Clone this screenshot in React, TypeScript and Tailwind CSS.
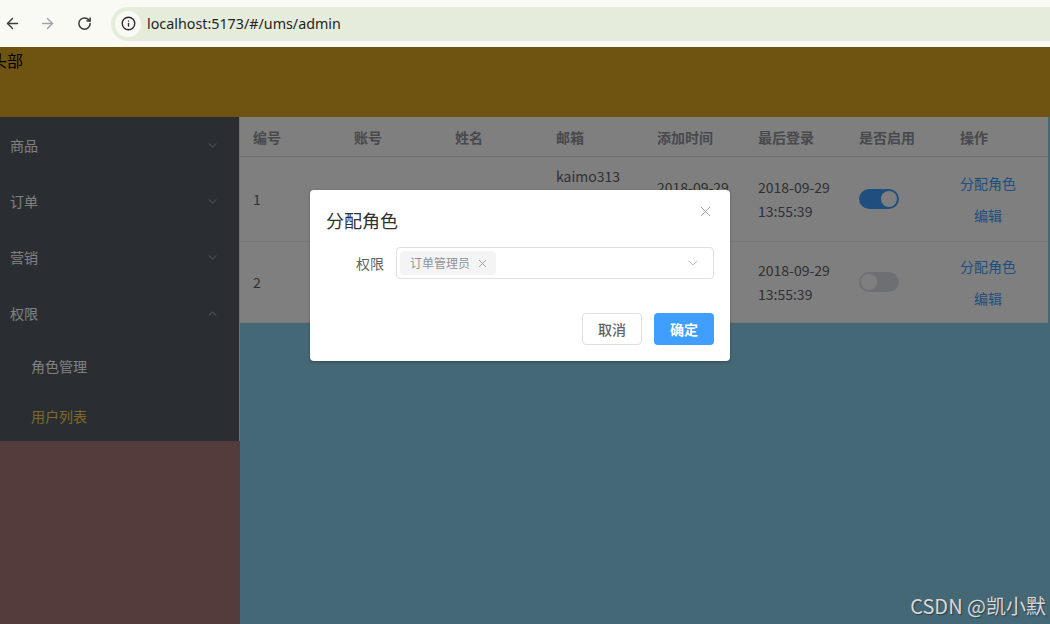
import { ArrowLeft, ArrowRight, RotateCw, Info, ChevronDown, ChevronUp, X } from 'lucide-react'

const COLS = ['编号', '账号', '姓名', '邮箱', '添加时间', '最后登录', '是否启用', '操作']

type Row = {
  id: number
  username: string
  nickName: string
  email: string[]
  createTime: [string, string]
  loginTime: [string, string]
  enabled: boolean
  height: string
}

const ROWS: Row[] = [
  {
    id: 1,
    username: 'admin',
    nickName: '系统管理员',
    email: ['kaimo313', '@foxmail.', 'com'],
    createTime: ['2018-09-29', '13:55:30'],
    loginTime: ['2018-09-29', '13:55:39'],
    enabled: true,
    height: 'h-[85px]',
  },
  {
    id: 2,
    username: 'kaimo',
    nickName: '凯小默',
    email: ['kaimo@qq', '.com'],
    createTime: ['2018-09-29', '13:55:30'],
    loginTime: ['2018-09-29', '13:55:39'],
    enabled: false,
    height: 'h-[81px]',
  },
]

const MENU = ['商品', '订单', '营销']

function BrowserBar() {
  return (
    <div className="flex h-[47px] items-center bg-[#f8faf3]">
      <div className="flex w-[111px] items-center">
        <ArrowLeft size={17} strokeWidth={2} className="ml-[4px] text-[#3c3c3c]" />
        <ArrowRight size={17} strokeWidth={2} className="ml-[18px] text-[#a3a3a3]" />
        <RotateCw size={15} strokeWidth={2.4} className="ml-[21px] text-[#3c3c3c]" />
      </div>
      <div className="flex h-[34px] flex-1 items-center rounded-l-full bg-[#e5ecdc] pl-[4px]">
        <div className="flex h-[26px] w-[26px] items-center justify-center rounded-full bg-[#f8faf3]">
          <Info size={15} strokeWidth={2.2} className="text-[#2a2a2a]" />
        </div>
        <span className="ml-[6px] font-['Noto_Sans','Open_Sans',sans-serif] text-[14.3px] text-[#1f1f1f]">
          localhost:5173/#/ums/admin
        </span>
      </div>
    </div>
  )
}

function Sidebar() {
  return (
    <div className="flex w-[240px] flex-col">
      <div className="border-r border-[#e6e6e6] bg-[#545c66] text-[14px] text-white">
        {MENU.map((m) => (
          <div key={m} className="flex h-[56px] items-center justify-between pl-[10px] pr-[20px]">
            <span>{m}</span>
            <ChevronDown size={13} strokeWidth={1.5} className="text-[#d0d0d0]" />
          </div>
        ))}
        <div className="flex h-[56px] items-center justify-between pl-[10px] pr-[20px]">
          <span>权限</span>
          <ChevronUp size={13} strokeWidth={1.5} className="text-[#d0d0d0]" />
        </div>
        <div className="flex h-[50px] items-center pl-[31px]">角色管理</div>
        <div className="flex h-[50px] items-center pl-[31px] text-[#ffd04b]">用户列表</div>
      </div>
      <div className="flex-1 bg-[#a67874]" />
    </div>
  )
}

function Switch({ on }: { on: boolean }) {
  return (
    <div
      className={`flex h-[20px] w-[40px] items-center rounded-full px-[2px] ${
        on ? 'justify-end bg-[#409eff]' : 'justify-start bg-[#dcdfe6]'
      }`}
    >
      <div className="h-[16px] w-[16px] rounded-full bg-white" />
    </div>
  )
}

function Lines({ lines }: { lines: string[] }) {
  return (
    <div className="flex flex-col">
      {lines.map((l) => (
        <span key={l}>{l}</span>
      ))}
    </div>
  )
}

function UserTable() {
  return (
    <div className="w-[808px] bg-white text-[14px] leading-6 text-[#606266]">
      <div className="grid h-[40px] grid-cols-8 border-b border-[#dfe2e8] font-bold text-[#909399]">
        {COLS.map((c) => (
          <div key={c} className="flex items-center pl-[13px] pr-3">
            {c}
          </div>
        ))}
      </div>
      {ROWS.map((r) => (
        <div key={r.id} className={`grid grid-cols-8 border-b border-[#ebeef5] ${r.height}`}>
          <div className="flex items-center pl-[13px] pr-3">{r.id}</div>
          <div className="flex items-center pl-[13px] pr-3">{r.username}</div>
          <div className="flex items-center pl-[13px] pr-3">{r.nickName}</div>
          <div className="flex items-center pl-[13px] pr-3 leading-[23px]">
            <Lines lines={r.email} />
          </div>
          <div className="flex items-center pl-[13px] pr-3">
            <Lines lines={r.createTime} />
          </div>
          <div className="flex items-center pl-[13px] pr-3">
            <Lines lines={r.loginTime} />
          </div>
          <div className="flex items-center pl-[13px] pr-3">
            <Switch on={r.enabled} />
          </div>
          <div className="flex items-center pl-[13px] pr-3">
            <div className="flex flex-col items-center gap-[8px] text-[#409eff]">
              <span>分配角色</span>
              <span>编辑</span>
            </div>
          </div>
        </div>
      ))}
    </div>
  )
}

function RoleDialog() {
  return (
    <div className="absolute left-[310px] top-[143px] w-[420px] rounded bg-white shadow-[0_1px_3px_rgba(0,0,0,0.3)]">
      <div className="flex items-start justify-between pl-[16px] pr-[16px] pt-[18px]">
        <span className="text-[18px] leading-6 text-[#303133]">分配角色</span>
        <X size={17} strokeWidth={1.2} className="mt-[-5px] text-[#909399]" />
      </div>
      <div className="mt-[15px] flex items-center pl-[20px] pr-[16px]">
        <label className="w-[66px] pr-[12px] text-right text-[14px] text-[#606266]">权限</label>
        <div className="flex h-[32px] flex-1 items-center justify-between rounded border border-[#dcdfe6] pl-[3px] pr-[12px]">
          <span className="flex h-[24px] items-center gap-[6px] rounded bg-[#f4f4f5] pl-[10px] pr-[7px] text-[12px] text-[#909399]">
            订单管理员
            <X size={13} strokeWidth={1.5} />
          </span>
          <ChevronDown size={16} strokeWidth={1.2} className="text-[#a8abb2]" />
        </div>
      </div>
      <div className="mt-[34px] flex justify-end gap-[12px] pb-[16px] pr-[16px]">
        <button className="h-[32px] w-[60px] rounded border border-[#dcdfe6] bg-white text-[14px] font-medium text-[#606266]">
          取消
        </button>
        <button className="h-[32px] w-[60px] rounded bg-[#409eff] text-[14px] font-semibold text-white">
          确定
        </button>
      </div>
    </div>
  )
}

export default function App() {
  return (
    <div className="relative h-[624px] w-[1050px] overflow-hidden font-['Noto_Sans_CJK_SC','Noto_Sans',sans-serif]">
      <BrowserBar />
      <div className="relative flex h-[577px] flex-col">
        <header className="h-[70px] bg-[#dca821] text-[16px] leading-6 text-black">
          <span className="ml-[-9px] inline-block pt-[1px]">头部</span>
        </header>
        <div className="flex flex-1">
          <Sidebar />
          <main className="flex-1 bg-[#8ad0ec]">
            <UserTable />
          </main>
        </div>
        {/* dialog mask */}
        <div className="absolute inset-0 bg-black/50" />
        <RoleDialog />
      </div>
      <div className="absolute bottom-[3px] right-[4px] text-[20px] text-[#d8d8d8] [text-shadow:1px_1px_1px_rgba(0,0,0,0.4)]">
        CSDN @凯小默
      </div>
    </div>
  )
}
